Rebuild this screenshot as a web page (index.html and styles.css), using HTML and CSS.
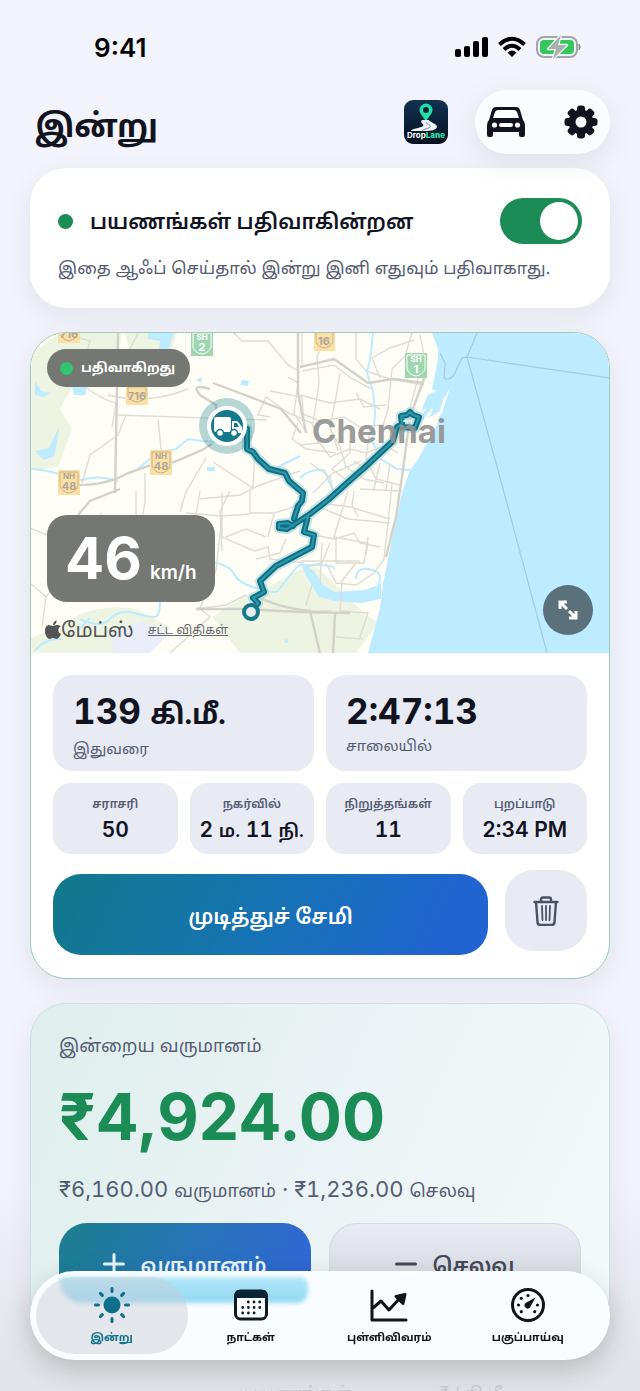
FILE: index.html
```html
<!DOCTYPE html>
<html lang="ta">
<head>
    <meta charset="UTF-8">
    <meta name="viewport" content="width=device-width, initial-scale=1.0">
    <title>DropLane</title>
    <link rel="stylesheet" href="styles.css">
</head>
<body>
    <div class="screen">
        <div class="status-bar">
            <span class="clock">9:41</span>
            <div class="status-icons">
                <svg width="33" height="22" viewBox="0 0 33 22">
                    <rect x="0" y="13" width="6" height="8" rx="2"/>
                    <rect x="9" y="10" width="6" height="11" rx="2"/>
                    <rect x="18" y="5" width="6" height="16" rx="2"/>
                    <rect x="27" y="1" width="6" height="20" rx="2"/>
                </svg>
                <svg width="28" height="22" viewBox="0 0 28 22" fill="none" stroke="#000" stroke-width="4">
                    <path d="M1.500 8.500Q14-3 26.500 8.500"/>
                    <path d="M6 13.500Q14 6 22 13.500"/>
                    <path d="M9.500 16.500Q14 12.500 18.500 16.500L14 21z" fill="#000" stroke="none"/>
                </svg>
                <svg width="46" height="24" viewBox="0 0 46 24">
                    <rect x="1" y="2" width="40" height="20" rx="7" fill="none" stroke="#a3a5aa" stroke-width="2"/>
                    <rect x="4" y="5" width="34" height="14" rx="4" fill="#34c759"/>
                    <path d="M43 9q2.500 3 0 6z" fill="#8e9095" stroke="#8e9095"/>
                    <path d="M25 0L12 14h8l-3 10L31 10h-9z" fill="#f2f3fb" stroke="#f2f3fb" stroke-width="2.500" stroke-linejoin="round"/>
                    <path d="M25 0L12 14h8l-3 10L31 10h-9z" fill="#a9b0ad"/>
                </svg>
            </div>
        </div>

        <header class="header">
            <h1>இன்று</h1>
            <div class="logo">
                <svg width="44" height="44" viewBox="0 0 44 44">
                    <path d="M22 21.500C18 15 15.500 13 15.500 10a6.500 6.500 0 0 1 13 0c0 3-2.500 5-6.500 11.500z" fill="#22dfa5"/>
                    <circle cx="22" cy="10" r="3" fill="#0a2238"/>
                    <path d="M18 20h7c0 2 9 4 8 7s-6 4-12 4H7c-1-2 10-3 12-5s-4-3-1-6z" fill="#eef3f5"/>
                    <path d="M22 22c0 2 6 3 4 5s-7 2-8 4" fill="none" stroke="#7d8d9a"/>
                </svg>
                <span class="logo-text">Drop<b>Lane</b></span>
            </div>
            <div class="header-actions">
                <button class="icon-button" aria-label="Car">
                    <svg width="38" height="32" viewBox="0 0 38 32">
                        <path d="M9 1h20q3 0 4 3l3 10q2 2 2 5v10q0 2-2 2h-2q-2 0-2-2v-3H6v3q0 2-2 2H2q-2 0-2-2V19q0-3 2-5L5 4q1-3 4-3z" fill="#11131f"/>
                        <path d="M11 4h16q2 0 3 2l2 6H6l2-6q1-2 3-2z" fill="#fbfcff"/>
                        <circle cx="7.500" cy="19" r="2.600" fill="#fbfcff"/>
                        <circle cx="30.500" cy="19" r="2.600" fill="#fbfcff"/>
                        <rect x="12" y="17" width="14" height="4" rx="2" fill="#fbfcff"/>
                    </svg>
                </button>
                <button class="icon-button" aria-label="Settings">
                    <svg width="34" height="34" viewBox="-17 -17 34 34" fill="#11131f">
                        <rect x="-4" y="-16.500" width="8" height="33" rx="3"/>
                        <rect x="-4" y="-16.500" width="8" height="33" rx="3" transform="rotate(45)"/>
                        <rect x="-4" y="-16.500" width="8" height="33" rx="3" transform="rotate(90)"/>
                        <rect x="-4" y="-16.500" width="8" height="33" rx="3" transform="rotate(135)"/>
                        <circle r="12.500"/>
                        <circle r="5.500" fill="#fbfcff"/>
                    </svg>
                </button>
            </div>
        </header>

        <section class="card tracking">
            <div class="tracking-row">
                <span class="dot"></span>
                <label for="tracking">பயணங்கள் பதிவாகின்றன</label>
                <input type="checkbox" id="tracking" class="switch" checked>
            </div>
            <p>இதை ஆஃப் செய்தால் இன்று இனி எதுவும் பதிவாகாது.</p>
        </section>

        <section class="card trip">
            <div class="map">
                <svg class="map-drawing" viewBox="0 0 580 320" preserveAspectRatio="xMidYMid slice">
                    <rect width="580" height="320" fill="#fefef6"/>
                    <!-- parks -->
                    <g fill="#edf4e2">
                        <path d="M0 22L30 0h62l-4 30-40 14-18 32 12 20-14 38-30 4z"/>
                        <path d="M95 0h52l-8 26-36 6z"/>
                        <path d="M36 290q26-20 70-14l34 18-20 26H0v-14z"/>
                        <path d="M182 284l34-22 26-10 40-22 22 20 30 30 14 10-22 30H210z"/>
                    </g>
                    <path d="M80 300l32-12 28 12-20 20H84z" fill="#e9eefa"/>
                    <!-- sea -->
                    <path d="M402 0L405 8L408 16V26L402 56L406 58L398 62L393 73L387 93L400 84L410 78L407 92L396 112L387 128L380 137L372 160L363 201L353 251L350 275L338 320H580V0z" fill="#bdebff"/>
                    <path d="M420 55l-7 12-4 13-14 8-8 12-5 24 8-10 10-20 12-14z" fill="#fefef6"/>
                    <path d="M402 76l-12 17 10-12zM395 76l-5 7" stroke="#fefef6" stroke-width="2" fill="none"/>
                    <!-- lakes and rivers -->
                    <g fill="#bdebff">
                        <path d="M118 0h26l-7 22-8-4 1-10-12-2z"/>
                        <path d="M5 48l6 10 10 2-8 4-8-2zM42 54h14v8H44zM29 94l-2 16-3 13-10 4-9-9 14-3zM166 47l6-3-1 6zM212 47l7 1-1 5-8-1zM177 134h8v4h-8zM36 108l4 2z"/>
                        <path d="M270 230l14 8 9 14 12 7 30-2 16-6v15l-20 4-26-2-16-4-12-20z"/>
                        <path d="M269 298l-3-8M256 305l3 5-5-1z"/>
                    </g>
                    <g fill="none" stroke="#bdebff" stroke-width="2">
                        <path d="M0 136q26 2 34 8t22 2 32 2"/>
                        <path d="M108 136l14-12 10-5 14-3 12-10 14 2 16 1"/>
                        <path d="M182 229q18 3 22 12t22 14 20 4 12-14 12-13 18 0 16 4"/>
                        <path d="M343 0l-2 20-4 20 6 18 2 22-2 30 8 16 16 10 14 1"/>
                        <path d="M50 286q20 10 30 0t24-6 20 4 6-16M60 285l-12 12M5 318q8-12 26-12"/>
                        <path d="M270 145q10-10 24-8l9 20M248 134l22-11M326 246q0-12 12-10t12 8l-2 18"/>
                    </g>
                    <!-- minor roads -->
                    <g fill="none" stroke="#dfdcd4" stroke-width="1.400">
                        <path d="M50 50q20 16 36 20l-4 24M87 82l150 5M128 86l4 40M96 82l-8 20-28 20-8 28"/>
                        <path d="M34 0l26 8-6 22-20 8M108 0l-12 24M78 62q40 10 80-6"/>
                        <path d="M176 125l-20 34-6 20M115 140v30l-6 30M183 129l40 26 2-38"/>
                        <path d="M204 0l8 8 26 0 20 24 12 7M240 84l-12-2 8-18 22 16 24 10 6 20"/>
                        <path d="M268 90l-6 16 14 10 30 4M272 32v-32M258 44l10 6-4 30 10 16M240 58l32 6 2 28"/>
                        <path d="M272 38l32-6 18 14 20 10M295 0l-8 24 2 26-6 40M310 40l-4 24-6 30 8 24"/>
                        <path d="M270 62l30 8 30-4 20 10M270 80l20 8 24-4 16 10 22-2M326 60l8 14 22-2"/>
                        <path d="M326 0v26l10 12 24 8 34 6M350 45l-8-20 18-10 24-8"/>
                        <path d="M382 0l-6 20 12 14 6-12-4-20M376 22l-14 14-4 40-6 20M394 24l-10 36-8 30"/>
                        <path d="M270 112l20-2 10 14 20-8 16 4 20-8 12 8"/>
                        <path d="M300 96l10 18 6 20 18 12 20 4M320 100v20l-18 16 16 12M340 96l-4 30 10 20 24 6"/>
                        <path d="M324 128l12 8M280 130l20 14 4 20M350 130l-6 26M360 130l-4 28M330 156l42 2"/>
                        <path d="M290 170l30 4 40 12M318 158l-8 26-6 20 34 6-2 12M324 158l-2 14 6 12M294 176l24 10 42 4"/>
                        <path d="M362 150l-4 40-4 36-10 14-18 12-20-2-10-20M306 204v26h28l4-26M292 210l-2 40M300 210l-8 20-16 4"/>
                        <path d="M284 202l20 4 20-6 6 10 20 4M270 228l60 0M326 230l-14 18-2 30 28 2-8 24 2 2-26-2"/>
                        <path d="M106 158v28l20 10 40-14 4-24M156 180l36 3 28-2M192 160v44l32 14 14-4 2 12 34 4"/>
                        <path d="M170 166l40-4 20-10 40-14M200 158l-10 20 2 40M220 158v22l24 0 26-8M244 180l-6 24"/>
                        <path d="M192 183l-6 54-16 38M166 276l30-4 20-10M196 204l20-8 20 8M256 206l-6 14-24 6"/>
                        <path d="M0 195l20 8M0 250l16 14-4 30M16 264l34-38M72 180l-26 24M140 320l40-36-12-10"/>
                        <path d="M282 252l-6 20M302 278h-32M283 160l20-20 28-12"/>
                    </g>
                    <!-- major roads -->
                    <g fill="none" stroke="#d4d1ca" stroke-width="2.400">
                        <path d="M88 0l-3 160"/>
                        <path d="M48 152q30 0 50-12l20-7 26-4 28-12 10-6"/>
                        <path d="M180 56q-20-6-10 6l16 10v30"/>
                        <path d="M183 50l32 12 36 14 20 24"/>
                        <path d="M48 182l12-14 30-12"/>
                        <path d="M270 34l34-8 34 24 26-4 30 4"/>
                        <path d="M396 40l-16 44-8 60-6 40-10 40"/>
                        <path d="M166 276h50l54 3 50 1"/>
                        <path d="M225 262q20 12 55 16l10 42M305 280l-2 40"/>
                        <path d="M268 0v60l8 40"/>
                    </g>
                    <!-- ferry lines -->
                    <path d="M447 0l-10 24-5 1-8 17q-5 6-10 3l1-15-5-10M437 24l143 21M437 24l38 139 42 157" fill="none" stroke="#a5ccda" stroke-width="1.200"/>
                    <!-- road shields -->
                    <g class="shield">
                        <rect x="28" y="-10" width="22" height="20" fill="#fae0a4"/>
                        <path d="M31-10h16v12q-2 5-8 6-6-1-8-6z"/>
                        <text x="39" y="5">716</text>
                    </g>
                    <g class="shield">
                        <rect x="96" y="54" width="22" height="18" fill="#fae0a4"/>
                        <path d="M98 54h18v9q-2 5-9 6-7-1-9-6z"/>
                        <text x="107" y="67">716</text>
                    </g>
                    <g class="shield">
                        <rect x="120" y="117" width="22" height="25" fill="#fae0a4"/>
                        <path d="M122 119h18v14q-2 6-9 7-7-1-9-7z"/>
                        <text x="131" y="126" class="shield-top">NH</text>
                        <text x="131" y="137">48</text>
                    </g>
                    <g class="shield">
                        <rect x="28" y="137" width="22" height="25" fill="#fae0a4"/>
                        <path d="M30 139h18v14q-2 6-9 7-7-1-9-7z"/>
                        <text x="39" y="146" class="shield-top">NH</text>
                        <text x="39" y="157">48</text>
                    </g>
                    <g class="shield">
                        <rect x="284" y="-6" width="21" height="24" fill="#fae0a4"/>
                        <path d="M286-6h17v15q-2 5-8 6-7-1-9-6z"/>
                        <text x="294" y="12">16</text>
                    </g>
                    <g class="shield green">
                        <rect x="161" y="-2" width="22" height="25" fill="#9fd6af"/>
                        <path d="M163 0h18v14q-2 6-9 7-7-1-9-7z"/>
                        <text x="172" y="7" class="shield-top">SH</text>
                        <text x="172" y="18">2</text>
                    </g>
                    <g class="shield green">
                        <rect x="375" y="20" width="22" height="25" fill="#9fd6af"/>
                        <path d="M377 22h18v14q-2 6-9 7-7-1-9-7z"/>
                        <text x="386" y="29" class="shield-top">SH</text>
                        <text x="386" y="40">1</text>
                    </g>
                    <!-- recorded route: halo, dark edge, light core -->
                    <g fill="none" stroke-linejoin="round" stroke-linecap="round">
                        <path d="M217 96v20l6 3 5 7 11 10 16 4 4 8 14 12-1 8-4 5-4 13M257 196l-8-1v-4l9-1 5 3M257 196l23-15 18-14 28-25 7-6 30-28 4-14 5-3-1-8 6-1 3-3 3 3 6 2-4 11-13-1M278 183l-4 16 10 3-2 12-36 19-16 15 4 11-11 6 5 5-7 8" stroke="#a8d5dc" stroke-width="10" opacity="0.700"/>
                        <path d="M217 96v20l6 3 5 7 11 10 16 4 4 8 14 12-1 8-4 5-4 13M257 196l-8-1v-4l9-1 5 3M257 196l23-15 18-14 28-25 7-6 30-28 4-14 5-3-1-8 6-1 3-3 3 3 6 2-4 11-13-1M278 183l-4 16 10 3-2 12-36 19-16 15 4 11-11 6 5 5-7 8" stroke="#116f83" stroke-width="6"/>
                        <path d="M217 96v20l6 3 5 7 11 10 16 4 4 8 14 12-1 8-4 5-4 13M257 196l-8-1v-4l9-1 5 3M257 196l23-15 18-14 28-25 7-6 30-28 4-14 5-3-1-8 6-1 3-3 3 3 6 2-4 11-13-1M278 183l-4 16 10 3-2 12-36 19-16 15 4 11-11 6 5 5-7 8" stroke="#2b98ab" stroke-width="2"/>
                        <path d="M374 88h5" stroke="#d3f2f5" stroke-width="2"/>
                    </g>
                    <circle cx="221" cy="279" r="7" fill="#e6ebf0" stroke="#14798c" stroke-width="4"/>
                    <text x="349" y="110" class="city">Chennai</text>
                    <!-- current vehicle position -->
                    <circle cx="197" cy="93" r="28" fill="#14798c" opacity="0.300"/>
                    <circle cx="197" cy="93" r="18" fill="#14798c" stroke="#fff" stroke-width="4"/>
                    <g fill="#fff">
                        <rect x="184" y="84" width="17" height="15" rx="2"/>
                        <path d="M202 88h4q2 0 3 2l3 4v6h-10z"/>
                        <circle cx="190" cy="100" r="3.500" stroke="#14798c" stroke-width="1.500"/>
                        <circle cx="204" cy="100" r="3.500" stroke="#14798c" stroke-width="1.500"/>
                        <path d="M204 90h3l2 4h-5z" fill="#14798c"/>
                    </g>
                </svg>
                <div class="recording"><span class="dot"></span>பதிவாகிறது</div>
                <div class="speed"><strong>46</strong><span>km/h</span></div>
                <div class="attribution">
                    <svg width="16" height="20" viewBox="0 0 16 20" fill="#555">
                        <path d="M8 6C6 6 5 4.800 3.500 5 1 5.500 0 8 0 11c0 4 2.500 8 4.500 8 1.500 0 2-1 3.500-1s2 1 3.500 1c2 0 3.500-3 4.500-5-3.500-1.500-3.500-6-.500-7.500C14 4.500 11.500 4.500 8 6z"/>
                        <path d="M8 5c0-2.500 1.500-4 3.500-4.500C11.800 3 10 5 8 5z"/>
                    </svg>
                    <span>மேப்ஸ்</span>
                    <a href="#legal">சட்ட விதிகள்</a>
                </div>
                <button class="expand" aria-label="Expand map">
                    <svg width="20" height="20" viewBox="0 0 20 20" fill="none" stroke="#fff" stroke-width="3">
                        <path d="M2 9V2h7M2 2l7 7M18 11v7h-7M18 18l-7-7"/>
                    </svg>
                </button>
            </div>

            <div class="trip-body">
                <div class="totals">
                    <div class="total"><strong>139 <small>கி.மீ.</small></strong><span>இதுவரை</span></div>
                    <div class="total"><strong>2:47:13</strong><span>சாலையில்</span></div>
                </div>
                <div class="stats">
                    <div class="stat"><span>சராசரி</span><strong>50</strong></div>
                    <div class="stat"><span>நகர்வில்</span><strong>2 <small>ம.</small> 11 <small>நி.</small></strong></div>
                    <div class="stat"><span>நிறுத்தங்கள்</span><strong>11</strong></div>
                    <div class="stat"><span>புறப்பாடு</span><strong>2:34 PM</strong></div>
                </div>
                <div class="trip-actions">
                    <button class="save">முடித்துச் சேமி</button>
                    <button class="delete" aria-label="Delete trip">
                        <svg width="26" height="30" viewBox="0 0 26 30" fill="none" stroke="#4b5268" stroke-width="2.400" stroke-linecap="round" stroke-linejoin="round">
                            <path d="M1.500 6h23M8 6V3.500q0-2 2-2h6q2 0 2 2V6M3 6l1.500 20q0 3 3 3h11q3 0 3-3L23 6"/>
                            <path d="M9 10l.500 14M13 10v14M17 10l-.500 14" stroke-width="1.800"/>
                        </svg>
                    </button>
                </div>
            </div>
        </section>

        <section class="card income">
            <h2>இன்றைய வருமானம்</h2>
            <div class="amount">₹4,924.00</div>
            <p>₹6,160.00 <small>வருமானம்</small> · ₹1,236.00 <small>செலவு</small></p>
            <div class="income-actions">
                <button class="add-income">
                    <svg width="22" height="22" viewBox="0 0 22 22" stroke="currentColor" stroke-width="3" stroke-linecap="round"><path d="M11 1.500v19M1.500 11h19"/></svg>
                    <span>வருமானம்</span>
                </button>
                <button class="add-expense">
                    <svg width="22" height="22" viewBox="0 0 22 22" stroke="currentColor" stroke-width="3" stroke-linecap="round"><path d="M1.500 11h19"/></svg>
                    <span>செலவு</span>
                </button>
            </div>
        </section>

        <div class="summary-heads">
            <span>பயணங்கள்</span>
            <span>₹ / கி.மீ</span>
        </div>

        <nav class="tab-bar">
            <a href="#today" class="tab active">
                <svg width="36" height="36" viewBox="-18 -18 36 36" fill="currentColor" stroke="currentColor" stroke-width="3" stroke-linecap="round">
                    <circle r="7"/>
                    <path d="M0-16.500v3M0 16.500v-3M-16.500 0h3M16.500 0h-3M-11.600-11.600l2 2M11.600-11.600l-2 2M-11.600 11.600l2-2M11.600 11.600l-2-2"/>
                </svg>
                <span>இன்று</span>
            </a>
            <a href="#days" class="tab">
                <svg width="36" height="36" viewBox="0 0 36 36">
                    <rect x="2.500" y="4" width="31" height="28" rx="5" fill="#fafdff" stroke="#101820" stroke-width="3"/>
                    <path d="M2 11V7q0-4 4-4h24q4 0 4 4v4z" fill="#082536"/>
                    <path d="M15.300 15h12M9.700 20.500h18M9.700 26h12" fill="none" stroke="#101820" stroke-width="2.800" stroke-linecap="round" stroke-dasharray="0 5.700"/>
                </svg>
                <span>நாட்கள்</span>
            </a>
            <a href="#stats" class="tab">
                <svg width="38" height="36" viewBox="0 0 38 36" fill="none" stroke="#101418" stroke-width="3" stroke-linecap="round" stroke-linejoin="round">
                    <path d="M2 4v29h34M3 21l8-7 8 9 10-11"/>
                    <path d="M26 9.500l9-2-2 9z" fill="#101418"/>
                </svg>
                <span>புள்ளிவிவரம்</span>
            </a>
            <a href="#analysis" class="tab">
                <svg width="36" height="36" viewBox="-18 -18 36 36" fill="#101418">
                    <circle r="15.500" fill="none" stroke="#101418" stroke-width="3"/>
                    <path d="M7.500-7.500L2 2.500A3 3 0 1 1-2.500-2z"/>
                    <circle cx="-9.500" cy="0" r="1.600"/>
                    <circle cx="9.500" cy="0" r="1.600"/>
                    <circle cx="-6.700" cy="-6.700" r="1.600"/>
                    <circle cx="0" cy="-9.500" r="1.600"/>
                    <circle cx="-6.700" cy="6.700" r="1.600"/>
                    <circle cx="6.700" cy="6.700" r="1.600"/>
                </svg>
                <span>பகுப்பாய்வு</span>
            </a>
        </nav>
    </div>
</body>
</html>
```
FILE: styles.css
```css
* {
    box-sizing: border-box;
}
body {
    font-family: Inter, "Noto Sans Tamil", "Noto Sans", sans-serif;
    background-color: #f2f3fb;
    color: #11131f;
    margin: 0;
}
h1, h2, p {
    margin: 0;
}
button {
    font-family: inherit;
    border: none;
    padding: 0;
    cursor: pointer;
}
svg {
    display: block;
    flex-shrink: 0;
}
.screen {
    height: 100vh;
    overflow: hidden;
    padding: 0 30px;
    background: linear-gradient(#f2f3fb 85%, #e3e4e9 98%);
}
.status-bar {
    display: flex;
    justify-content: space-between;
    align-items: center;
    height: 90px;
    padding: 4px 28px 0 64px;
}
.clock {
    font-size: 26px;
    font-weight: 600;
    color: #000;
}
.status-icons {
    display: flex;
    align-items: center;
    gap: 10px;
}
.header {
    display: flex;
    align-items: center;
    height: 64px;
    margin-bottom: 14px;
}
.header h1 {
    font-size: 32px;
    font-weight: 700;
    line-height: 48px;
    padding: 8px 0 0 5px;
    flex: 1;
}
.logo {
    position: relative;
    width: 44px;
    height: 44px;
    border-radius: 9px;
    background: linear-gradient(#123252, #04101f);
    overflow: hidden;
    margin-right: 27px;
}
.logo-text {
    position: absolute;
    left: 0;
    right: 0;
    bottom: 3px;
    text-align: center;
    font-size: 8px;
    line-height: 12px;
    font-weight: 700;
    color: #fff;
}
.logo-text b {
    color: #22dfa5;
}
.header-actions {
    display: flex;
    justify-content: space-between;
    align-items: center;
    width: 135px;
    height: 64px;
    padding: 0 12px;
    border-radius: 32px;
    background-color: #fbfcff;
    box-shadow: 0 8px 32px rgba(0, 0, 0, 0.08);
}
.icon-button {
    background: none;
}
.card {
    border-radius: 36px;
    background-color: #fff;
    box-shadow: 0 8px 28px rgba(30, 40, 60, 0.07);
    margin-bottom: 24px;
}
.dot {
    width: 15px;
    height: 15px;
    border-radius: 50%;
    background-color: #1b8c56;
}
.tracking {
    height: 140px;
    padding: 30px 28px;
}
.tracking-row {
    display: flex;
    align-items: center;
    height: 46px;
}
.tracking-row label {
    flex: 1;
    padding: 4px 0 0 17px;
    font-size: 21px;
    font-weight: 600;
    white-space: nowrap;
}
.switch {
    appearance: none;
    width: 82px;
    height: 46px;
    margin: 0;
    padding: 4px;
    border-radius: 23px;
    background-color: #1b8c56;
    display: flex;
    justify-content: flex-end;
}
.switch::before {
    content: "";
    width: 38px;
    height: 38px;
    border-radius: 50%;
    background-color: #fff;
}
.tracking p {
    font-size: 17px;
    line-height: 30px;
    padding-top: 9px;
    color: #555c72;
    white-space: nowrap;
}
.trip {
    border: 1px solid #9bcdb8;
    overflow: hidden;
}
.map {
    position: relative;
    height: 320px;
    overflow: hidden;
}
.map-drawing {
    width: 100%;
    height: 100%;
}
.shield {
    font-size: 11px;
    font-weight: 700;
    text-anchor: middle;
    fill: #b0a698;
}
.shield path {
    fill: none;
    stroke: #c9b084;
}
.shield-top {
    font-size: 8px;
}
.green {
    fill: #fff;
}
.green path {
    stroke: #fff;
}
.city {
    font-size: 33px;
    font-weight: 700;
    text-anchor: middle;
    fill: #929292;
    opacity: 0.9;
}
.recording,
.speed {
    position: absolute;
    left: 16px;
    background-color: #747772;
    color: #fff;
}
.recording {
    top: 16px;
    display: flex;
    align-items: center;
    gap: 8px;
    height: 38px;
    padding: 0 15px 0 13px;
    border-radius: 19px;
    font-size: 13px;
    font-weight: 700;
}
.recording .dot {
    width: 13px;
    height: 13px;
    background-color: #2fc66f;
}
.speed {
    top: 182px;
    display: flex;
    align-items: baseline;
    gap: 8px;
    height: 87px;
    padding: 0 18px;
    border-radius: 20px;
    line-height: 87px;
}
.speed strong {
    font-size: 58px;
}
.speed span {
    font-size: 19px;
    font-weight: 600;
}
.attribution {
    position: absolute;
    left: 14px;
    bottom: 8px;
    display: flex;
    align-items: center;
    color: #555;
    font-size: 20px;
    line-height: 30px;
}
.attribution a {
    margin-left: 14px;
    font-size: 12px;
    color: #666;
}
.expand {
    position: absolute;
    right: 16px;
    bottom: 18px;
    width: 50px;
    height: 50px;
    border-radius: 50%;
    background-color: #5a707b;
    display: grid;
    place-items: center;
}
.trip-body {
    padding: 22px 22px 23px;
    display: grid;
    gap: 12px;
}
.totals {
    display: grid;
    grid-template-columns: 1fr 1fr;
    gap: 12px;
}
.total {
    height: 96px;
    padding: 14px 20px;
    border-radius: 20px;
    background-color: #e8eaf4;
}
.total strong {
    display: block;
    font-size: 35px;
    line-height: 44px;
    font-variant-numeric: tabular-nums;
    white-space: nowrap;
}
.total small {
    font-size: 28px;
}
.total span {
    display: block;
    font-size: 15px;
    line-height: 26px;
    color: #555c72;
}
.stats {
    display: grid;
    grid-template-columns: repeat(4, 1fr);
    gap: 12px;
}
.stat {
    height: 71px;
    padding: 9px 0;
    border-radius: 18px;
    background-color: #e8eaf4;
    text-align: center;
    white-space: nowrap;
}
.stat span {
    display: block;
    font-size: 12px;
    line-height: 24px;
    font-weight: 600;
    color: #555c72;
}
.stat strong {
    display: block;
    font-size: 21px;
    line-height: 28px;
    font-weight: 600;
    font-variant-numeric: tabular-nums;
}
.stat small {
    font-size: 18px;
}
.trip-actions {
    display: flex;
    gap: 17px;
    height: 85px;
    margin-top: 4px;
}
.save {
    flex: 1;
    height: 81px;
    padding-top: 6px;
    align-self: flex-end;
    border-radius: 28px;
    background: linear-gradient(115deg, #11798b, #1672b4 50%, #2064d2 90%);
    color: #fff;
    font-size: 21px;
    font-weight: 600;
}
.delete {
    width: 82px;
    height: 81px;
    border-radius: 28px;
    background-color: #e8eaf4;
    display: grid;
    place-items: center;
}
.income {
    padding: 27px 28px;
    height: 329px;
    border: 1px solid #c6e3e1;
    background: linear-gradient(115deg, #dfeeed, #eaf3f5 50%, #f4faf9);
}
.income h2 {
    font-size: 18px;
    line-height: 30px;
    font-weight: 400;
    color: #555c72;
}
.amount {
    margin: 16px 0;
    font-size: 64px;
    line-height: 80px;
    font-weight: 700;
    color: #1b8c56;
}
.income p {
    font-size: 22px;
    line-height: 32px;
    color: #555c72;
    font-variant-numeric: tabular-nums;
    white-space: nowrap;
}
.income small {
    font-size: 18px;
}
.income-actions {
    display: grid;
    grid-template-columns: 1fr 1fr;
    gap: 18px;
    margin-top: 16px;
}
.income-actions button {
    height: 81px;
    border-radius: 28px;
    display: flex;
    align-items: center;
    justify-content: center;
    gap: 15px;
    font-size: 21px;
    font-weight: 600;
}
.income-actions span {
    padding-top: 6px;
}
.income-actions .add-income {
    background: linear-gradient(115deg, #1b7f8e, #2774b8 50%, #3068d2 90%);
    color: #e6f5fc;
}
.income-actions .add-expense {
    background: linear-gradient(#e9ebf5, #d2d4da);
    border: 1px solid #d6d8e2;
    color: #444858;
}
.summary-heads {
    display: flex;
    gap: 88px;
    padding: 22px 0 0 214px;
    font-size: 17px;
    line-height: 30px;
    color: #c9cbd0;
    white-space: nowrap;
}
.tab-bar {
    position: fixed;
    left: 30px;
    right: 30px;
    bottom: 31px;
    height: 89px;
    display: grid;
    grid-template-columns: repeat(4, 1fr);
    padding: 6px 13px;
    border-radius: 45px;
    background-color: #fafdff;
    box-shadow: 0 10px 28px rgba(0, 0, 0, 0.18);
}
/* light of the blue button through the bar */
.tab-bar::before {
    content: "";
    position: absolute;
    left: 30px;
    top: 6px;
    width: 248px;
    height: 26px;
    border-radius: 6px 12px 16px 32px;
    background: linear-gradient(#b2e6f8, #92d9f4);
    filter: blur(2px);
}
.tab {
    position: relative;
    display: flex;
    flex-direction: column;
    align-items: center;
    gap: 2px;
    padding-top: 10px;
    border-radius: 39px;
    color: #101418;
    text-decoration: none;
    font-size: 11px;
    line-height: 24px;
    font-weight: 700;
    white-space: nowrap;
}
.tab svg {
    height: 36px;
}
.active {
    color: #0e708a;
    background-color: rgba(200, 204, 212, 0.45);
    margin: 0 -6px 0 -7px;
}
```
